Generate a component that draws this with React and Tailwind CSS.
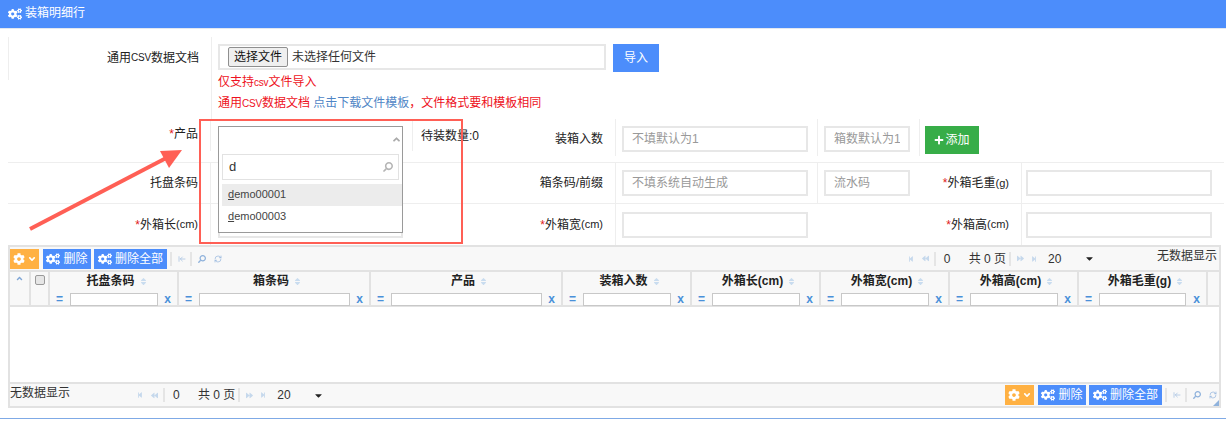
import React from 'react';
import { FaCogs, FaCog, FaAngleDown, FaAngleUp, FaPlus, FaSearch, FaSort, FaStepBackward, FaStepForward, FaBackward, FaForward, FaCaretDown } from 'react-icons/fa';
import { ArrowLeftToLine, RefreshCw } from 'lucide-react';

const FONT = 'font-["Liberation_Sans","Noto_Sans_CJK_SC",sans-serif]';

// latin bits render narrower than the CJK text in this form
function Narrow({ children }) {
    return <span className="text-[10px] tracking-[-0.2px]">{children}</span>;
}

function Unit({ children }) {
    return <span className="text-[11px]">{children}</span>;
}

function Label({ children, required, className = '' }) {
    return (
        <div className={`flex items-center justify-end pr-3 border-r border-[#eeeeee] text-[12px] text-[#222222] ${className}`}>
            {required && <span className="text-[#e02020]">*</span>}
            {children}
        </div>
    );
}

function Field({ placeholder, className = '' }) {
    return (
        <input
            placeholder={placeholder}
            className={`h-[26px] border-2 border-[#e7e7e7] bg-white px-2 text-[12px] placeholder:text-[#999999] ${className}`}
        />
    );
}

// toolbar buttons, used at top and bottom of the grid
function GridActions() {
    return (
        <div className="flex items-center">
            <div className="w-[29px] h-[20px] bg-[#ffb143] flex items-center justify-center gap-[2px] text-white">
                <FaCog size={12} />
                <FaAngleDown size={10} />
            </div>
            <div className="ml-1 w-[48px] h-[20px] bg-[#4c8dfb] flex items-center justify-center gap-[3px] text-white text-[12px]">
                <FaCogs size={14} />
                删除
            </div>
            <div className="ml-[3px] w-[73px] h-[20px] bg-[#4c8dfb] flex items-center justify-center gap-[3px] text-white text-[12px]">
                <FaCogs size={14} />
                删除全部
            </div>
            <div className="ml-[3px] h-[14px] border-l-2 border-[#e5e5e5]" />
            <ArrowLeftToLine size={8} className="ml-[6px] text-[#9dbce0]" />
            <div className="ml-[4px] h-[14px] border-l-2 border-[#e5e5e5]" />
            <FaSearch size={8} className="ml-[6px] text-[#8fb2dc] -scale-x-100" />
            <RefreshCw size={8} className="ml-[8px] text-[#8fb2dc]" />
        </div>
    );
}

function Pager() {
    return (
        <div className="flex items-center text-[12px] text-[#333333]">
            <FaStepBackward size={6} className="text-[#c5d8ec]" />
            <FaBackward size={7} className="ml-[8px] text-[#c5d8ec]" />
            <div className="ml-[5px] h-[14px] border-l-2 border-[#e5e5e5]" />
            <span className="ml-[8px] w-[25px]">0</span>
            <span>共 0 页</span>
            <div className="ml-[3px] h-[14px] border-l-2 border-[#e5e5e5]" />
            <FaForward size={7} className="ml-[6px] text-[#c5d8ec]" />
            <FaStepForward size={6} className="ml-[7px] text-[#c5d8ec]" />
            <span className="ml-[11px] w-[36px]">20</span>
            <FaCaretDown size={11} className="text-[#222222]" />
        </div>
    );
}

const COLUMNS = [
    { title: '托盘条码', input: 'w-[88px]' },
    { title: '箱条码', input: 'w-[151px]' },
    { title: '产品', input: 'w-[151px]' },
    { title: '装箱入数', input: 'w-[88px]' },
    { title: '外箱长(cm)', input: 'w-[88px]' },
    { title: '外箱宽(cm)', input: 'w-[88px]' },
    { title: '外箱高(cm)', input: 'w-[88px]' },
    { title: '外箱毛重(g)', input: 'w-[87px]' },
];

export default function App() {
    return (
        <div className={`relative w-[1226px] h-[437px] bg-white overflow-hidden ${FONT}`}>
            {/* Title bar */}
            <div className="h-[29px] bg-[#4c8dfb] border-b border-[#e3e8f0] flex items-center pl-2 gap-[3px] text-white text-[12px]">
                <FaCogs size={14} />
                <span className="pb-[3px]">装箱明细行</span>
            </div>

            {/* Import row */}
            <div className="mt-2 ml-2 flex h-[82px]">
                <Label className="w-[203px] h-[43px] border-r-0 border-l pb-[2px]">通用<Narrow>CSV</Narrow>数据文档</Label>
                <div className="border-l border-[#eeeeee] pl-[6px] pt-[7px]">
                    <div className="flex">
                        <div className="w-[388px] h-[26px] border-2 border-[#e7e7e7] flex items-center pl-[8px] text-[12px] text-[#333333]">
                            <div className="w-[60px] h-[20px] border border-[#8f8f8f] rounded-[2px] bg-[#efefef] flex items-center justify-center text-[#111111]">选择文件</div>
                            <span className="ml-[4px]">未选择任何文件</span>
                        </div>
                        <div className="ml-[7px] w-[46px] h-[28px] bg-[#4c8dfb] text-white text-[12px] flex items-center justify-center">导入</div>
                    </div>
                    <p className="mt-[2px] text-[12px] leading-[16px] text-[#ee1122]">仅支持<Narrow>csv</Narrow>文件导入</p>
                    <p className="mt-[4px] text-[12px] leading-[16px] text-[#ee1122]">
                        通用<Narrow>CSV</Narrow>数据文档 <span className="text-[#4f86c6]">点击下载文件模板</span>，文件格式要和模板相同
                    </p>
                </div>
            </div>

            {/* Product row */}
            <div className="ml-2 mr-[2px] flex h-[44px] border-b border-[#eeeeee]">
                <Label required className="w-[203px] h-[32px] pb-[2px]">产品</Label>
                <div className="w-[202px] h-[32px] border-r border-[#eeeeee]" />
                <div className="w-[203px] h-[37px] flex items-center border-r border-[#eeeeee] pl-2 pr-3 justify-between text-[12px] text-[#222222]">
                    <span className="pb-[4px]">待装数量:0</span>
                    <span className="pt-[3px]">装箱入数</span>
                </div>
                <div className="pl-[6px] pt-[7px] w-[202px] h-[37px] border-r border-[#eeeeee]"><Field placeholder="不填默认为1" className="w-[186px]" /></div>
                <div className="pl-[6px] pt-[7px] w-[102px] h-[37px] border-r border-[#eeeeee]"><Field placeholder="箱数默认为1" className="w-[86px]" /></div>
                <div className="pl-[5px] pt-[7px]">
                    <div className="w-[54px] h-[28px] bg-[#37ad48] text-white text-[12px] flex items-center justify-center gap-[1px]"><FaPlus size={10} />添加</div>
                </div>
            </div>

            {/* Barcode row */}
            <div className="ml-2 mr-[2px] flex h-[41px] border-b border-[#eeeeee]">
                <Label className="w-[203px]">托盘条码</Label>
                <div className="w-[202px] pl-[7px] pt-[7px]"><Field className="w-[185px]" /></div>
                <Label className="w-[203px]">箱条码/前缀</Label>
                <div className="pl-[6px] pt-[7px] w-[202px] border-r border-[#eeeeee]"><Field placeholder="不填系统自动生成" className="w-[186px]" /></div>
                <div className="pl-[6px] pt-[7px] w-[98px]"><Field placeholder="流水码" className="w-[86px]" /></div>
                <Label required className="w-[106px]">外箱毛重<Unit>(g)</Unit></Label>
                <div className="pl-[4px] pt-[7px]"><Field className="w-[186px]" /></div>
            </div>

            {/* Size row */}
            <div className="ml-2 mr-[2px] flex h-[41px]">
                <Label required className="w-[203px]">外箱长<Unit>(cm)</Unit></Label>
                <div className="w-[202px] pl-[7px] pt-[8px]"><Field className="w-[185px]" /></div>
                <Label required className="w-[203px]">外箱宽<Unit>(cm)</Unit></Label>
                <div className="pl-[6px] pt-[8px] w-[300px]"><Field className="w-[186px]" /></div>
                <Label required className="w-[106px]">外箱高<Unit>(cm)</Unit></Label>
                <div className="pl-[4px] pt-[8px]"><Field className="w-[186px]" /></div>
            </div>

            {/* Grid */}
            <div className="ml-2 w-[1213px] h-[163px] border-2 border-[#e2e2e2] flex flex-col">
                <div className="h-[23px] bg-[#f8f8f8] flex items-center justify-between pr-[2px] border-b-2 border-[#e2e2e2] box-content">
                    <GridActions />
                    <div className="flex items-center">
                        <Pager />
                        <span className="ml-[62px] pb-[5px] text-[12px] text-[#333333]">无数据显示</span>
                    </div>
                </div>
                <div className="flex h-[33px] border-b-2 border-[#e2e2e2] box-content bg-[#f8f8f8]">
                    <div className="w-[21px] border-r-2 border-[#e2e2e2] flex justify-center pt-[2px]">
                        <FaAngleUp size={9} className="text-[#7fa6d6]" />
                    </div>
                    <div className="w-[19px] border-r-2 border-[#e2e2e2] flex justify-center pt-[3px]">
                        <div className="w-[10px] h-[10px] border border-[#9a9a9a] rounded-[2px] bg-[#e6e6e6]" />
                    </div>
                    {COLUMNS.map((col, i) => (
                        <div key={col.title} className={`${i === 1 || i === 2 ? 'w-[192px]' : 'w-[129px]'} border-r-2 border-[#e2e2e2] flex flex-col items-center`}>
                            <div className="h-[18px] pl-[7px] flex items-center gap-[4px] text-[12px] font-bold text-[#222222]">
                                {col.title}
                                <FaSort size={9} className="text-[#c9dcef]" />
                            </div>
                            <div className="w-full flex items-center justify-between px-[6px] text-[12px] font-bold text-[#4a90d9]">
                                <span>=</span>
                                <input className={`${col.input} h-[13px] border border-[#c8c8c8] bg-white`} />
                                <span>x</span>
                            </div>
                        </div>
                    ))}
                </div>
                <div className="flex-1 bg-white" />
                <div className="relative h-[22px] border-t-2 border-[#e2e2e2] box-content bg-[#f8f8f8] flex items-center justify-between pr-[2px]">
                    <div className="flex items-center">
                        <span className="pb-[5px] text-[12px] text-[#333333] w-[127px]">无数据显示</span>
                        <Pager />
                    </div>
                    <GridActions />
                    <svg className="absolute right-0 bottom-0" width="6" height="6" viewBox="0 0 6 6">
                        <path d="M6 0V6H0Z" fill="#8fb2dc" />
                    </svg>
                </div>
            </div>

            <div className="mt-[10px] border-t border-[#7faae6]" />

            {/* Open dropdown */}
            <div className="absolute left-[218px] top-[126px] w-[185px] h-[107px] border border-[#9a9a9a] bg-white">
                <FaAngleUp size={11} className="absolute right-0 top-[7px] text-[#aaaaaa]" />
                <div className="absolute left-[3px] top-[27px] w-[177px] h-[26px] border border-[#e2e2e2] bg-white flex items-center justify-between pl-[6px] pr-[5px] text-[13px] text-[#333333]">
                    d
                    <FaSearch size={10} className="text-[#b5b5b5] -scale-x-100" />
                </div>
                <div className="absolute left-[3px] right-0 top-[57px] h-[22px] bg-[#ececec] pl-[6px] pb-[1px] flex items-center text-[11px] text-[#444444]"><u>d</u>emo00001</div>
                <div className="absolute left-[3px] right-0 top-[79px] h-[22px] pl-[6px] pb-[1px] flex items-center text-[11px] text-[#444444]"><u>d</u>emo00003</div>
            </div>

            {/* Annotation */}
            <div className="absolute left-[199px] top-[119px] w-[264px] h-[125px] border-2 border-[#ff5f55]" />
            <svg className="absolute left-0 top-0 pointer-events-none" width="1226" height="437">
                <path d="M30 229L172 155" stroke="#ff5f55" strokeWidth="4" fill="none" />
                <path d="M182 150L160 151L169 168Z" fill="#ff5f55" />
            </svg>
        </div>
    );
}
